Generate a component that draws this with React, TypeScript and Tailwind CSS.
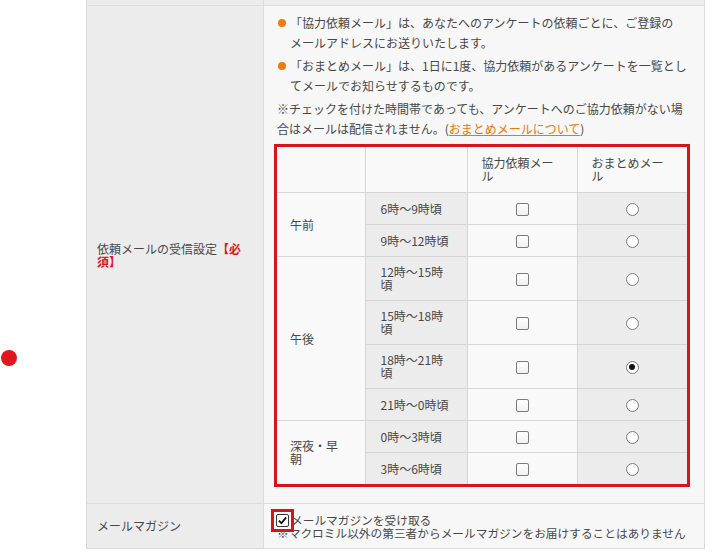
import React from 'react';

const Check: React.FC = () => (
  <span className="inline-block w-[13px] h-[13px] border border-[#7a7a7a] rounded-[2px] bg-gradient-to-b from-white to-[#f0f0f0] align-middle" />
);

const Radio: React.FC<{ on?: boolean }> = ({ on }) => (
  <span className="inline-flex w-[13px] h-[13px] items-center justify-center rounded-full border border-[#7a7a7a] bg-white align-middle">
    {on && <span className="w-[6px] h-[6px] rounded-full bg-[#111]" />}
  </span>
);

type Slot = { time: React.ReactNode; h: string; on?: boolean };

const groups: { name: React.ReactNode; slots: Slot[] }[] = [
  {
    name: '午前',
    slots: [
      { time: '6時〜9時頃', h: 'h-[32px]' },
      { time: '9時〜12時頃', h: 'h-[32px]' },
    ],
  },
  {
    name: '午後',
    slots: [
      { time: <>12時〜15時<br />頃</>, h: 'h-[44px]' },
      { time: <>15時〜18時<br />頃</>, h: 'h-[44px]' },
      { time: <>18時〜21時<br />頃</>, h: 'h-[44px]', on: true },
      { time: '21時〜0時頃', h: 'h-[32px]' },
    ],
  },
  {
    name: <>深夜・早<br />朝</>,
    slots: [
      { time: '0時〜3時頃', h: 'h-[32px]' },
      { time: '3時〜6時頃', h: 'h-[32px]' },
    ],
  },
];

const cell = 'border border-[#d6d6d6]';

export default function App() {
  return (
    <div className="relative w-[712px] h-[552px] overflow-hidden bg-white font-['Noto_Sans_CJK_JP','Liberation_Sans',sans-serif] text-[12px] text-[#484848]">
      {/* annotation marker */}
      <span className="absolute left-[1px] top-[350px] w-[16px] h-[16px] rounded-full bg-[#e2161c]" />

      <div className="ml-[86px] w-[619px] border-x border-b border-[#d9d9d9]">
        {/* bottom of previous row */}
        <div className="flex h-[5px]">
          <div className="w-[177px] shrink-0 bg-[#ececec] border-r border-[#dcdcdc]" />
          <div className="flex-1 bg-[#eeeeee]" />
        </div>

        {/* 依頼メールの受信設定 */}
        <div className="flex border-t border-[#dcdcdc]">
          <div className="w-[177px] shrink-0 bg-[#ececec] border-r border-[#dcdcdc] flex items-center px-[10px] leading-[13px]">
            <p>
              依頼メールの受信設定<span className="font-bold text-[#e0141e]">【必<br />須】</span>
            </p>
          </div>
          <div className="flex-1 bg-[#f7f7f7] pt-[7px] pl-[10px] pb-[16px] leading-[20px]">
            <ul className="space-y-[3px]">
              <li className="flex">
                <span className="w-[16px] shrink-0 flex justify-center pt-[6px]">
                  <span className="w-[8px] h-[8px] rounded-full bg-[#f07a12]" />
                </span>
                <span>
                  「協力依頼メール」は、あなたへのアンケートの依頼ごとに、ご登録の<br />
                  メールアドレスにお送りいたします。
                </span>
              </li>
              <li className="flex">
                <span className="w-[16px] shrink-0 flex justify-center pt-[6px]">
                  <span className="w-[8px] h-[8px] rounded-full bg-[#f07a12]" />
                </span>
                <span>
                  「おまとめメール」は、1日に1度、協力依頼があるアンケートを一覧とし<br />
                  てメールでお知らせするものです。
                </span>
              </li>
            </ul>
            <p className="mt-[3px] pl-[3px]">
              ※チェックを付けた時間帯であっても、アンケートへのご協力依頼がない場<br />
              合はメールは配信されません。(
              <a className="text-[#e8770e] underline">おまとめメールについて</a>)
            </p>

            <div className="mt-[5px] w-[416px] border-[3px] border-[#d7141c]">
              <table className="w-full table-fixed border-collapse border-hidden leading-[13px]">
                <colgroup>
                  <col className="w-[88px]" />
                  <col className="w-[102px]" />
                  <col className="w-[110px]" />
                  <col className="w-[110px]" />
                </colgroup>
                <thead>
                  <tr className="h-[45px] bg-[#f9f9f9]">
                    <th className={cell} />
                    <th className={cell} />
                    <th className={`${cell} pl-[14px] text-left font-normal`}>
                      協力依頼メー<br />ル
                    </th>
                    <th className={`${cell} pl-[14px] text-left font-normal`}>
                      おまとめメー<br />ル
                    </th>
                  </tr>
                </thead>
                <tbody>
                  {groups.map((g, gi) =>
                    g.slots.map((s, si) => (
                      <tr key={`${gi}-${si}`} className={s.h}>
                        {si === 0 && (
                          <td rowSpan={g.slots.length} className={`${cell} bg-[#f9f9f9] pl-[13px]`}>
                            {g.name}
                          </td>
                        )}
                        <td className={`${cell} bg-[#ececec] pl-[15px]`}>{s.time}</td>
                        <td className={`${cell} bg-[#f9f9f9] text-center`}>
                          <Check />
                        </td>
                        <td className={`${cell} bg-[#ececec] text-center`}>
                          <Radio on={s.on} />
                        </td>
                      </tr>
                    ))
                  )}
                </tbody>
              </table>
            </div>
          </div>
        </div>

        {/* メールマガジン */}
        <div className="flex h-[45px] border-t border-[#dcdcdc]">
          <div className="w-[177px] shrink-0 bg-[#ececec] border-r border-[#dcdcdc] flex items-center px-[10px]">
            メールマガジン
          </div>
          <div className="relative flex-1 bg-[#f7f7f7] flex items-center pl-[13px] text-[11.7px] leading-[13px]">
            <p>
              <span className="inline-block w-[14px]" />
              メールマガジンを受け取る<br />
              ※マクロミル以外の第三者からメールマガジンをお届けすることはありません
            </p>
            <div className="absolute left-[7px] top-[5px] w-[23px] h-[23px] border-[3px] border-[#d7141c] bg-[#f7f7f7] flex items-center justify-center">
              <span className="flex w-[13px] h-[13px] items-center justify-center border border-[#333] rounded-[2px] bg-white">
                <svg viewBox="0 0 12 12" className="w-[11px] h-[11px]">
                  <path d="M2 6.2 L4.8 9 L10 2.6" fill="none" stroke="#111" strokeWidth="2" />
                </svg>
              </span>
            </div>
          </div>
        </div>
      </div>
    </div>
  );
}
